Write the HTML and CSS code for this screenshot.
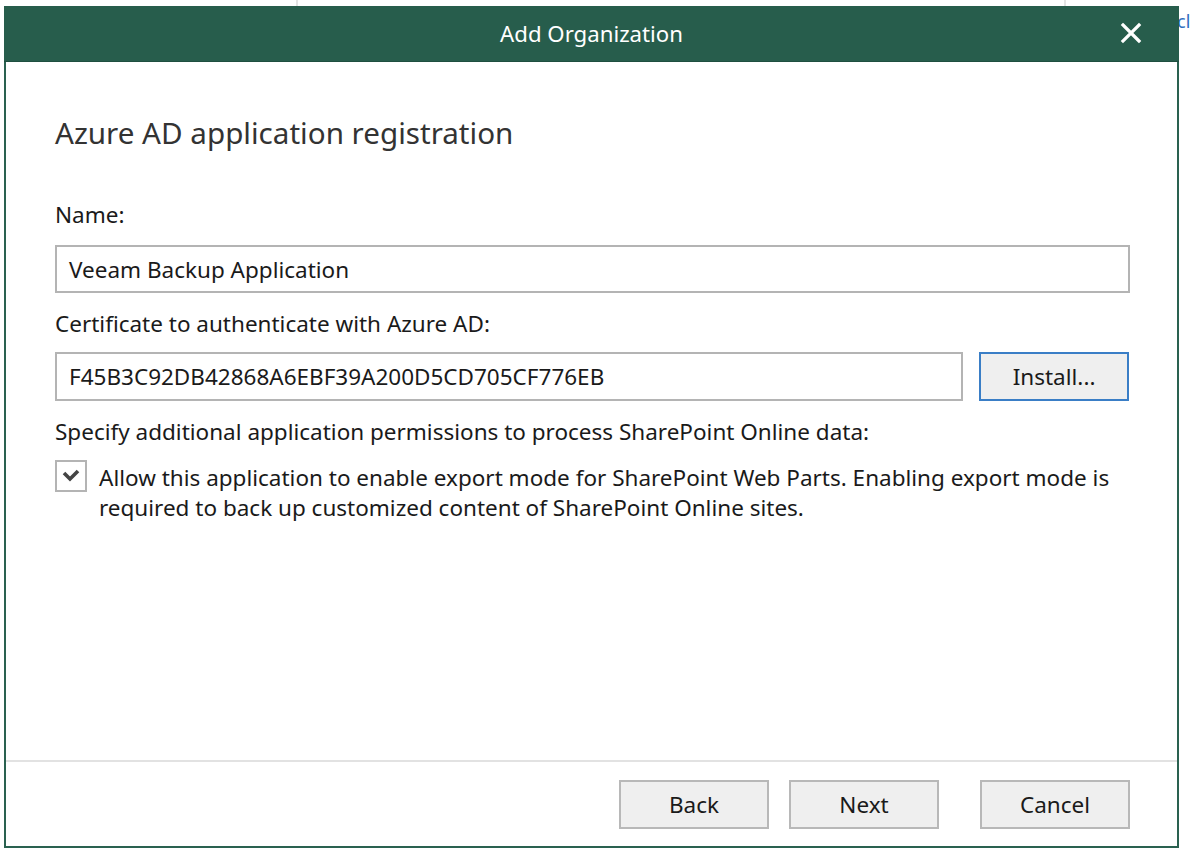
FILE: index.html
```html
<!DOCTYPE html>
<html>
<head>
<meta charset="utf-8">
<link rel="stylesheet" href="styles.css">
</head>
<body>
<div class="backdrop">
  <span class="bg-line bg-line-1"></span>
  <span class="bg-line bg-line-2"></span>
  <span class="bg-link">cl</span>
</div>
<div class="dialog">
  <div class="titlebar">
    <span class="titlebar-text">Add Organization</span>
    <span class="close">
      <svg width="22" height="22" viewBox="0 0 22 22"><path d="M3 3 L19 19 M19 3 L3 19" stroke="#ffffff" stroke-width="3.2" stroke-linecap="square"/></svg>
    </span>
  </div>
  <div class="content">
    <h1 class="heading">Azure AD application registration</h1>
    <div class="label label-name">Name:</div>
    <div class="field field-full">Veeam Backup Application</div>
    <div class="label label-cert">Certificate to authenticate with Azure AD:</div>
    <div class="row">
      <div class="field field-cert">F45B3C92DB42868A6EBF39A200D5CD705CF776EB</div>
      <button class="btn btn-focus">Install...</button>
    </div>
    <div class="label label-perm">Specify additional application permissions to process SharePoint Online data:</div>
    <div class="check-row">
      <span class="checkbox">
        <svg width="20" height="16" viewBox="0 0 20 16"><path d="M3 5 L9 11 L17 3" fill="none" stroke="#444444" stroke-width="3.6"/></svg>
      </span>
      <span class="check-text">Allow this application to enable export mode for SharePoint Web Parts. Enabling export mode is required to back up customized content of SharePoint Online sites.</span>
    </div>
  </div>
  <div class="footer">
    <button class="btn">Back</button>
    <button class="btn">Next</button>
    <button class="btn btn-cancel">Cancel</button>
  </div>
</div>
</body>
</html>
```
FILE: styles.css
```css
html, body {
  margin: 0;
  padding: 0;
  background: #ffffff;
  width: 1190px;
  height: 860px;
  overflow: hidden;
  font-family: "Noto Sans", "Open Sans", sans-serif;
  color: #1f1f1f;
}
.backdrop {
  position: absolute;
  left: 0;
  top: 0;
  width: 1190px;
  height: 860px;
}
.bg-line {
  position: absolute;
  top: 0;
  width: 2px;
  height: 6px;
  background: #e4e4e4;
}
.bg-line-1 { left: 296px; }
.bg-line-2 { left: 1064px; }
.bg-link {
  position: absolute;
  left: 1177px;
  top: 7px;
  font-size: 18px;
  line-height: 28px;
  color: #2f6fc0;
}
.dialog {
  position: relative;
  margin: 6px 0 0 4px;
  width: 1175px;
  height: 842px;
  box-sizing: border-box;
  border: 2px solid #2a6150;
  border-top: none;
  background: #ffffff;
  display: flex;
  flex-direction: column;
}
.titlebar {
  height: 56px;
  margin: 0 -2px;
  background: #275d4c;
  display: flex;
  align-items: center;
  justify-content: center;
  position: relative;
  border-bottom: 1px solid #1f4f40;
  box-sizing: border-box;
}
.titlebar-text {
  color: #ffffff;
  font-size: 22.2px;
}
.close {
  position: absolute;
  right: 37px;
  top: 16px;
  width: 22px;
  height: 22px;
}
.content {
  flex: 1;
  padding: 0 48px 0 49px;
  display: flex;
  flex-direction: column;
}
.heading {
  margin: 51px 0 0 0;
  font-weight: normal;
  font-size: 29.6px;
  line-height: 40px;
  color: #333333;
}
.label {
  font-size: 22.5px;
  line-height: 30px;
  color: #1a1a1a;
  white-space: nowrap;
}
.label-name { margin-top: 47px; }
.label-cert { margin-top: 16px; }
.label-perm { margin-top: 16px; }
.field {
  box-sizing: border-box;
  height: 48px;
  border: 2px solid #b4b4b4;
  padding: 0 12px;
  display: flex;
  align-items: center;
  font-size: 22.5px;
  color: #1a1a1a;
  white-space: nowrap;
}
.field-full {
  margin-top: 15px;
  width: 1075px;
}
.row {
  display: flex;
  gap: 16px;
  margin-top: 13px;
}
.field-cert {
  width: 909px;
  height: 49px;
}
.btn {
  box-sizing: border-box;
  width: 150px;
  height: 49px;
  border: 2px solid #b8b8b8;
  background: #efefef;
  font-family: inherit;
  font-size: 22.5px;
  color: #1a1a1a;
  padding: 0;
}
.btn-focus {
  border-color: #3a7ec6;
}
.check-row {
  display: flex;
  align-items: flex-start;
  gap: 12px;
  margin-top: 13px;
}
.checkbox {
  flex: none;
  box-sizing: border-box;
  width: 32px;
  height: 32px;
  border: 2px solid #b4b4b4;
  display: flex;
  align-items: center;
  justify-content: center;
}
.check-text {
  font-size: 22.5px;
  line-height: 30px;
  color: #1a1a1a;
  width: 1031px;
  margin-top: 3px;
}
.footer {
  height: 84px;
  border-top: 2px solid #e2e2e2;
  display: flex;
  align-items: center;
  justify-content: flex-end;
  padding-right: 47px;
  gap: 20px;
}
.btn-cancel {
  margin-left: 21px;
}
```
